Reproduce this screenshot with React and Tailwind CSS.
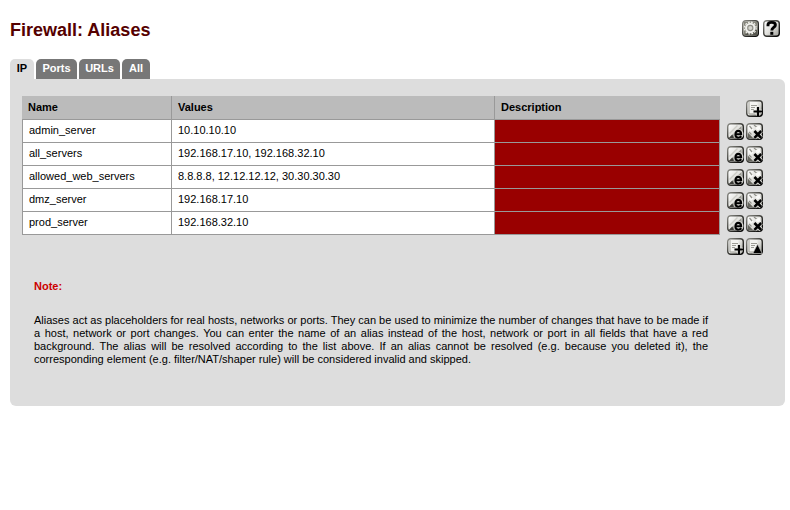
const tabs = [
  { label: "IP", width: "w-6", active: true },
  { label: "Ports", width: "w-[41px]" },
  { label: "URLs", width: "w-[41px]" },
  { label: "All", width: "w-7" },
];

const aliases = [
  ["admin_server", "10.10.10.10"],
  ["all_servers", "192.168.17.10, 192.168.32.10"],
  ["allowed_web_servers", "8.8.8.8, 12.12.12.12, 30.30.30.30"],
  ["dmz_server", "192.168.17.10"],
  ["prod_server", "192.168.32.10"],
];

function Button({ children }) {
  return (
    <svg width="17" height="17" viewBox="0 0 17 17" className="block shrink-0">
      <defs>
        <linearGradient id="face" x1="0" y1="0" x2="1" y2="1">
          <stop offset="0" stopColor="#ffffff" />
          <stop offset="0.5" stopColor="#e2e2de" />
          <stop offset="1" stopColor="#9a9a94" />
        </linearGradient>
        <linearGradient id="rim" x1="0" y1="0" x2="1" y2="1">
          <stop offset="0" stopColor="#8d8d87" />
          <stop offset="0.5" stopColor="#3c3c38" />
          <stop offset="1" stopColor="#000000" />
        </linearGradient>
      </defs>
      <rect x="0.7" y="0.7" width="15.6" height="15.6" rx="3" fill="url(#face)" stroke="url(#rim)" strokeWidth="1.4" />
      {children}
    </svg>
  );
}

function Sheet() {
  return (
    <>
      <path d="M3.5 2h8v11.5h-8z" fill="#f4f4f1" />
      <path d="M3 2v12h6" fill="none" stroke="#a5a59e" />
      <path d="M5 5.5h6M5 7.5h4M5 9.5h3" stroke="#9c9c95" />
    </>
  );
}

function AddIcon() {
  return (
    <Button>
      <Sheet />
      <path d="M12 6.5v9M7.5 11.5H16" stroke="#e6e6e1" strokeWidth="3.6" />
      <path d="M12 7v9M7.5 11.5h9" stroke="#000" strokeWidth="2.2" />
    </Button>
  );
}

function UpIcon() {
  return (
    <Button>
      <Sheet />
      <path d="M11.5 6.3L16.2 15.5H6.8z" fill="#000" stroke="#d4d4ce" strokeWidth="0.6" />
    </Button>
  );
}

function EditIcon() {
  return (
    <Button>
      <path d="M2.5 14.5L14.5 3v11.5z" fill="#96968f" />
      <path d="M2.5 10.5L10.5 2.5" stroke="#cdcdc7" strokeWidth="1.5" />
      <path d="M1.8 15l3.5-3.5L7 15z" fill="#3c3c38" />
      <circle cx="11.5" cy="11" r="5" fill="#dadad4" />
      <path d="M8.4 11.3h5.7c0-4.6-5.7-4.6-5.7-.1 0 4.1 4 4.3 6 2.1" fill="none" stroke="#000" strokeWidth="2.1" />
    </Button>
  );
}

function DeleteIcon() {
  return (
    <Button>
      <path d="M4 2.5l3.5 4L5 8.5 2.5 5z" fill="#fbfbf9" />
      <path d="M3.5 3l2.5 3M8 2l3 2.5M3 9l2.5 2.5" stroke="#92928b" strokeWidth="1.2" />
      <path d="M9.5 4.5l4-2 1.5 4.5-4 .5z" fill="#fafaf8" />
      <path d="M1.8 15V9.5L7 15z" fill="#67675f" />
      <path d="M8.2 7.8l7 7M15.2 7.8l-7 7" stroke="#deded9" strokeWidth="4.4" />
      <path d="M8.4 8l6.8 6.8M15.2 8l-6.8 6.8" stroke="#000" strokeWidth="2.6" />
    </Button>
  );
}

function GearIcon() {
  return (
    <Button>
      <path d="M1.7 1.7h13.6v13.6H1.7z" fill="#85857b" />
      <path d="M2 15.2h13.2V7z" fill="#56564e" />
      <circle cx="8.3" cy="8" r="5.9" fill="none" stroke="#f0f0ea" strokeWidth="1.2" strokeDasharray="1.8 1.29" />
      <circle cx="8.3" cy="8" r="5.3" fill="#f0f0ec" />
      <circle cx="8.3" cy="8" r="2.6" fill="#d4d4ce" stroke="#8b8b83" strokeWidth="1.1" />
    </Button>
  );
}

function HelpIcon() {
  return (
    <Button>
      <path d="M5 6.3V4.8C5 2.8 6.2 2.4 8.6 2.4s3.8.6 3.8 2.5c0 2.7-3.6 2.4-3.6 5.6" fill="none" stroke="#000" strokeWidth="2.9" />
      <path d="M7.3 11.8h3v3h-3z" fill="#000" />
    </Button>
  );
}

export default function App() {
  return (
    <main className="h-[510px] w-[790px] overflow-hidden bg-white pl-2.5 font-[Helvetica,'Liberation_Sans',Arial,sans-serif] text-[11px] leading-[13px] text-black">
      <header className="flex h-[59px] w-[770px] justify-between pt-5">
        <h1 className="text-[18px] leading-5 font-bold text-[#550000]">Firewall: Aliases</h1>
        <div className="flex gap-1">
          <GearIcon />
          <HelpIcon />
        </div>
      </header>
      <nav className="flex h-5 gap-0.5">
        {tabs.map((t) => (
          <div
            key={t.label}
            className={`${t.width} rounded-t-[5px] pt-[3px] text-center font-bold ${t.active ? "bg-[#dddddd]" : "bg-[#777777] text-white"}`}
          >
            {t.label}
          </div>
        ))}
      </nav>
      <section className="h-[327px] w-[775px] rounded-b-md rounded-tr-md bg-[#dddddd] pt-[17px] pl-3">
        <div className="flex">
          <div className="w-[698px]">
            <div className="flex h-6 border-b border-[#999999] bg-[#bbbbbb] font-bold">
              <div className="w-[150px] border-r border-[#999999] pt-[5px] pl-1.5">Name</div>
              <div className="w-[323px] border-r border-[#999999] pt-[5px] pl-1.5">Values</div>
              <div className="pt-[5px] pl-1.5">Description</div>
            </div>
            {aliases.map(([name, values]) => (
              <div key={name} className="flex h-[23px] border-b border-l border-[#999999] bg-white">
                <div className="w-[149px] border-r border-[#999999] pt-1 pl-1.5">{name}</div>
                <div className="w-[323px] border-r border-[#999999] pt-1 pl-1.5">{values}</div>
                <div className="flex-1 border-r border-[#999999] bg-[#990000]" />
              </div>
            ))}
          </div>
          <div className="ml-[7px] flex w-9 flex-col gap-1.5 pt-1">
            <div className="flex justify-end">
              <AddIcon />
            </div>
            {aliases.map(([name]) => (
              <div key={name} className="flex gap-0.5">
                <EditIcon />
                <DeleteIcon />
              </div>
            ))}
            <div className="flex gap-0.5">
              <AddIcon />
              <UpIcon />
            </div>
          </div>
        </div>
        <div className="mt-[25px] ml-3 w-[674px]">
          <h2 className="font-bold text-[#cc0000]">Note:</h2>
          <p className="mt-[21px] text-justify">
            Aliases act as placeholders for real hosts, networks or ports. They can be used to minimize the number of changes that have to be made if a host, network or port changes. You can enter the name of an alias instead of the host, network or port in all fields that have a red background. The alias will be resolved according to the list above. If an alias cannot be resolved (e.g. because you deleted it), the corresponding element (e.g. filter/NAT/shaper rule) will be considered invalid and skipped.
          </p>
        </div>
      </section>
    </main>
  );
}
